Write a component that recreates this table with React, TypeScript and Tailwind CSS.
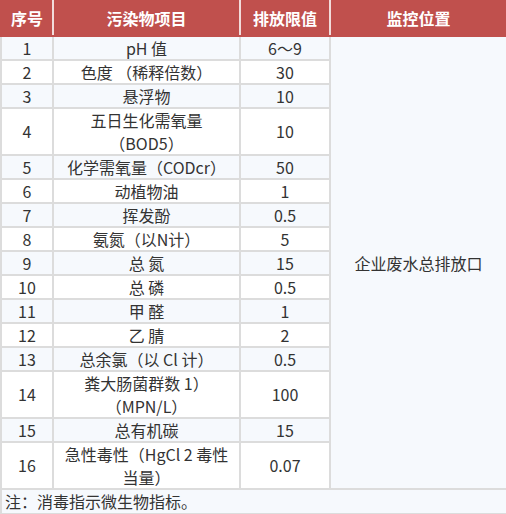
import React from "react";

interface Row {
  no: string;
  item: React.ReactNode;
  limit: string;
  tall?: boolean;
}

const rows: Row[] = [
  { no: "1", item: "pH 值", limit: "6～9" },
  { no: "2", item: "色度 （稀释倍数）", limit: "30" },
  { no: "3", item: "悬浮物", limit: "10" },
  { no: "4", item: <>五日生化需氧量<br />（BOD5）</>, limit: "10", tall: true },
  { no: "5", item: "化学需氧量（CODcr）", limit: "50" },
  { no: "6", item: "动植物油", limit: "1" },
  { no: "7", item: "挥发酚", limit: "0.5" },
  { no: "8", item: "氨氮（以N计）", limit: "5" },
  { no: "9", item: "总 氮", limit: "15" },
  { no: "10", item: "总 磷", limit: "0.5" },
  { no: "11", item: "甲 醛", limit: "1" },
  { no: "12", item: "乙 腈", limit: "2" },
  { no: "13", item: "总余氯（以 Cl 计）", limit: "0.5" },
  { no: "14", item: <>粪大肠菌群数 1）<br />（MPN/L）</>, limit: "100", tall: true },
  { no: "15", item: "总有机碳", limit: "15" },
  { no: "16", item: <>急性毒性（HgCl 2 毒性<br />当量）</>, limit: "0.07", tall: true },
];

export default function App() {
  return (
    <div
      className="w-[506px] h-[514px] bg-white text-[#333333]"
      style={{ fontFamily: '"Noto Sans CJK SC", "Microsoft YaHei", sans-serif' }}
    >
      <table className="w-[506px] table-fixed border-collapse border-2 border-[#dcdcdc] text-[16px]">
        <colgroup>
          <col className="w-[52px]" />
          <col className="w-[187px]" />
          <col className="w-[90px]" />
          <col className="w-[177px]" />
        </colgroup>
        <thead>
          <tr className="bg-[#c0504d] text-white font-bold text-[16px]">
            <th className="h-[35px] p-0 leading-[33px] border-2 border-[#c0504d] border-r-[#f2dcdb]">序号</th>
            <th className="h-[35px] p-0 leading-[33px] border-2 border-[#c0504d] border-r-[#f2dcdb]">污染物项目</th>
            <th className="h-[35px] p-0 leading-[33px] border-2 border-[#c0504d] border-r-[#f2dcdb]">排放限值</th>
            <th className="h-[35px] p-0 leading-[33px] border-2 border-[#c0504d]">监控位置</th>
          </tr>
        </thead>
        <tbody>
          {rows.map((r, i) => {
            const bg = i % 2 === 0 ? "bg-[#f6f9fd]" : "bg-white";
            const h = r.tall ? "h-[47px] leading-[22.5px]" : "h-[24px] leading-[22px]";
            return (
              <tr key={r.no} className={bg}>
                <td className={`${h} p-0 text-center border-2 border-[#dcdcdc]`}>{r.no}</td>
                <td className={`${h} p-0 text-center border-2 border-[#dcdcdc]`}>{r.item}</td>
                <td className={`${h} p-0 text-center border-2 border-[#dcdcdc]`}>{r.limit}</td>
                {i === 0 && (
                  <td
                    rowSpan={16}
                    className="p-0 text-center align-middle bg-[#f6f9fd] border-2 border-[#dcdcdc]"
                  >
                    企业废水总排放口
                  </td>
                )}
              </tr>
            );
          })}
          <tr className="bg-[#f6f9fd]">
            <td colSpan={4} className="h-[25px] px-[3px] py-0 leading-[23px] text-left border-2 border-[#dcdcdc]">
              注：消毒指示微生物指标。
            </td>
          </tr>
        </tbody>
      </table>
    </div>
  );
}
